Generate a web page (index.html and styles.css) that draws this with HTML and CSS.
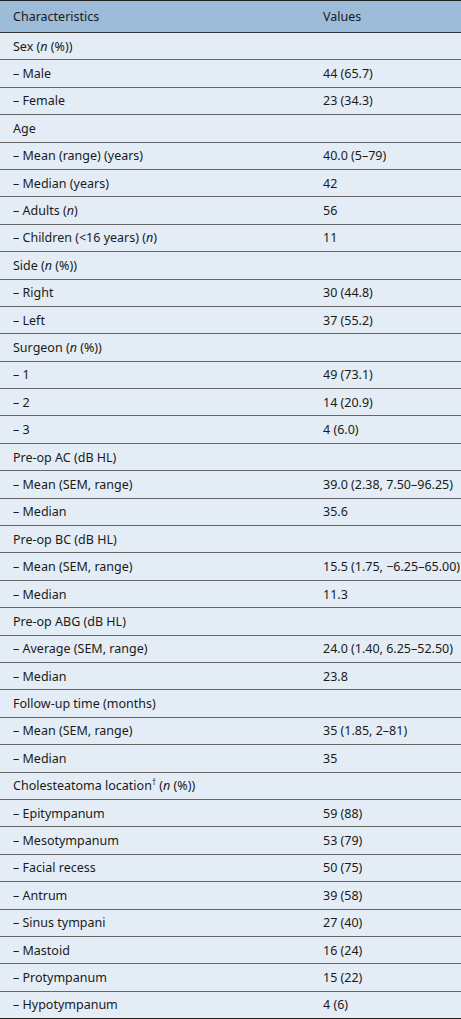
FILE: index.html
```html
<!DOCTYPE html>
<html>
<head>
<meta charset="utf-8">
<link rel="stylesheet" href="styles.css">
</head>
<body>
<table class="data">
<thead>
<tr><th>Characteristics</th><th>Values</th></tr>
</thead>
<tbody>
<tr><td>Sex (<i>n</i> (%))</td><td></td></tr>
<tr><td>– Male</td><td>44 (65.7)</td></tr>
<tr><td>– Female</td><td>23 (34.3)</td></tr>
<tr><td>Age</td><td></td></tr>
<tr><td>– Mean (range) (years)</td><td>40.0 (5–79)</td></tr>
<tr><td>– Median (years)</td><td>42</td></tr>
<tr><td>– Adults (<i>n</i>)</td><td>56</td></tr>
<tr><td>– Children (&lt;16 years) (<i>n</i>)</td><td>11</td></tr>
<tr><td>Side (<i>n</i> (%))</td><td></td></tr>
<tr><td>– Right</td><td>30 (44.8)</td></tr>
<tr><td>– Left</td><td>37 (55.2)</td></tr>
<tr><td>Surgeon (<i>n</i> (%))</td><td></td></tr>
<tr><td>– 1</td><td>49 (73.1)</td></tr>
<tr><td>– 2</td><td>14 (20.9)</td></tr>
<tr><td>– 3</td><td>4 (6.0)</td></tr>
<tr><td>Pre-op AC (dB HL)</td><td></td></tr>
<tr><td>– Mean (SEM, range)</td><td>39.0 (2.38, 7.50–96.25)</td></tr>
<tr><td>– Median</td><td>35.6</td></tr>
<tr><td>Pre-op BC (dB HL)</td><td></td></tr>
<tr><td>– Mean (SEM, range)</td><td>15.5 (1.75, −6.25–65.00)</td></tr>
<tr><td>– Median</td><td>11.3</td></tr>
<tr><td>Pre-op ABG (dB HL)</td><td></td></tr>
<tr><td>– Average (SEM, range)</td><td>24.0 (1.40, 6.25–52.50)</td></tr>
<tr><td>– Median</td><td>23.8</td></tr>
<tr><td>Follow-up time (months)</td><td></td></tr>
<tr><td>– Mean (SEM, range)</td><td>35 (1.85, 2–81)</td></tr>
<tr><td>– Median</td><td>35</td></tr>
<tr><td>Cholesteatoma location<sup>†</sup> (<i>n</i> (%))</td><td></td></tr>
<tr><td>– Epitympanum</td><td>59 (88)</td></tr>
<tr><td>– Mesotympanum</td><td>53 (79)</td></tr>
<tr><td>– Facial recess</td><td>50 (75)</td></tr>
<tr><td>– Antrum</td><td>39 (58)</td></tr>
<tr><td>– Sinus tympani</td><td>27 (40)</td></tr>
<tr><td>– Mastoid</td><td>16 (24)</td></tr>
<tr><td>– Protympanum</td><td>15 (22)</td></tr>
<tr><td>– Hypotympanum</td><td>4 (6)</td></tr>
</tbody>
</table>
</body>
</html>
```
FILE: styles.css
```css
html, body {
  margin: 0;
  padding: 0;
  background: #ffffff;
}
.data {
  width: 461px;
  border-collapse: collapse;
  font-family: "Noto Sans", "DejaVu Sans", sans-serif;
  font-size: 12.5px;
  color: #1a1a1a;
  border-top: 1px solid #222;
  border-bottom: 2px solid #222;
}
.data th {
  background: #9dbcd9;
  font-weight: normal;
  text-align: left;
  height: 31px;
  padding: 0 0 0 13px;
  border-bottom: 1px solid #333;
}
.data td {
  background: #e4edf5;
  height: 26.4px;
  padding: 0 0 0 13px;
  border-top: 1px solid #666;
}
.data th:first-child, .data td:first-child { width: 297px; }
.data sup {
  font-size: 8px;
  line-height: 0;
}
```
